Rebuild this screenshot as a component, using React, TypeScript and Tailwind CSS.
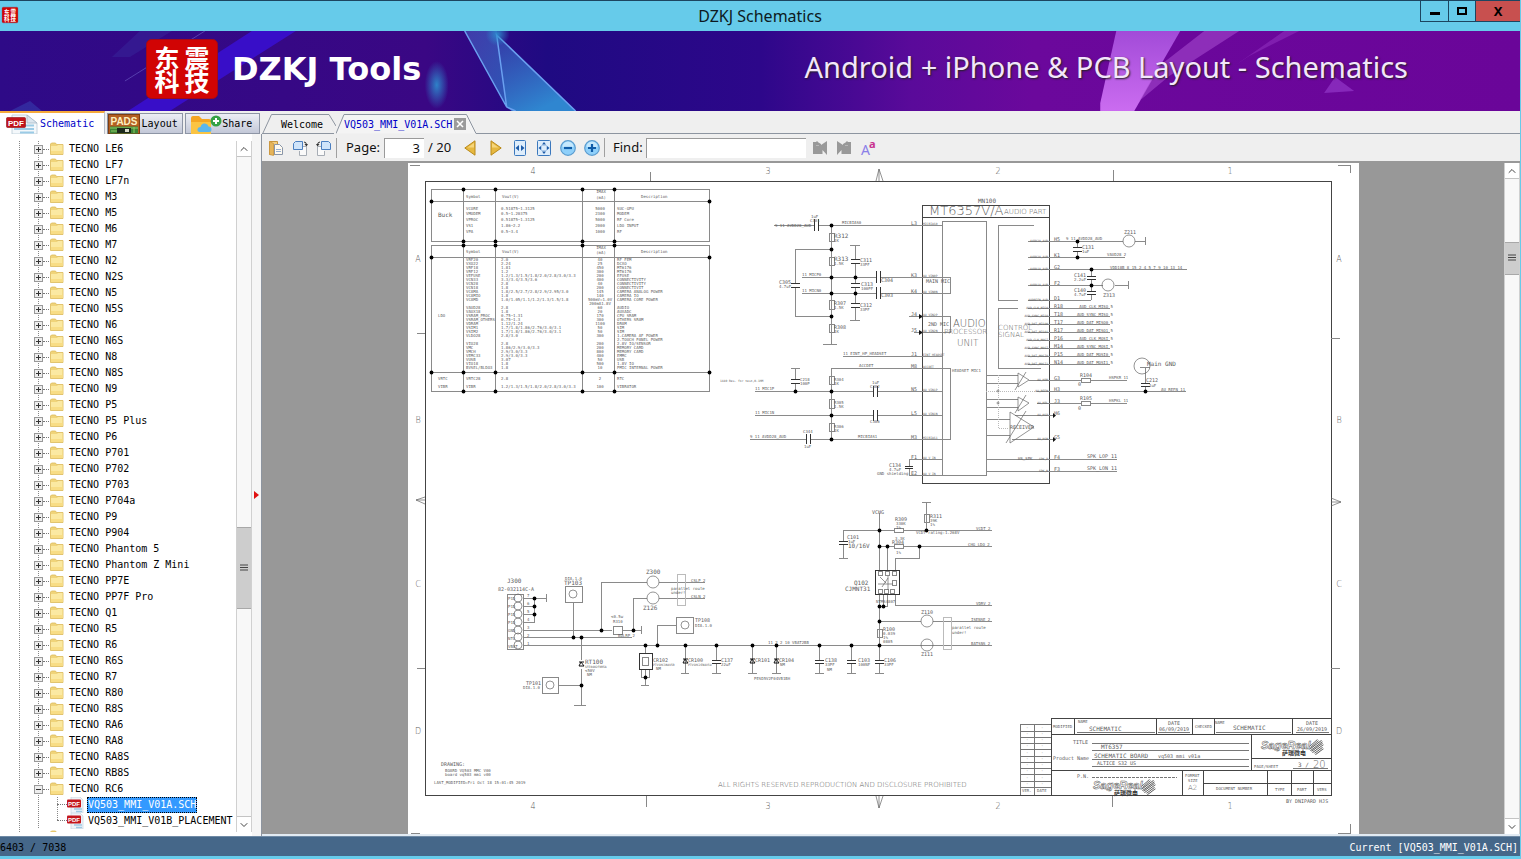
import { ChevronDown, ChevronUp } from "lucide-react";
import type { ReactNode } from "react";

type Label = [x: number, y: number, text: string, size?: number, anchor?: "start" | "middle" | "end"];

const models = [
  "LE6", "LF7", "LF7n", "M3", "M5", "M6", "M7", "N2", "N2S", "N5", "N5S", "N6", "N6S", "N8", "N8S", "N9",
  "P5", "P5 Plus", "P6", "P701", "P702", "P703", "P704a", "P9", "P904", "Phantom 5", "Phantom Z Mini",
  "PP7E", "PP7F Pro", "Q1", "R5", "R6", "R6S", "R7", "R80", "R8S", "RA6", "RA8", "RA8S", "RB8S", "RC6",
];

const files = ["VQ503_MMI_V01A.SCH", "VQ503_MMI_V01B_PLACEMENT"];

/* ---------- icons ---------- */

const FolderIcon = () => (
  <svg className="h-4 w-4 shrink-0" viewBox="0 0 16 16">
    <path d="M1.5 3 L2.5 2 H6.5 L7.5 3.500 H14 V13.500 H1.5 Z" fill="#f0d47a" stroke="#dcba5c" strokeWidth="0.8" />
    <path d="M2 5 H8 L9 4 H13.500 V13 H2 Z" fill="#fbe9a2" />
    <path d="M2 10 H13.500 V13 H2 Z" fill="#f8dd85" />
  </svg>
);

const PdfIcon = () => (
  <svg className="h-4 w-5 shrink-0" viewBox="0 0 20 16">
    <path d="M4 0 H13 L16 3 V16 H4 Z" fill="#eef3f8" stroke="#c5d3df" strokeWidth="0.7" />
    <path d="M7 12 H15 M9 14.5 H15" stroke="#9fc9e3" strokeWidth="1.5" />
    <rect x="0" y="2.500" width="14" height="8" rx="1" fill="#c4161c" />
    <text x="7" y="9" fontSize="6" fontWeight="bold" fill="#fff" textAnchor="middle" fontFamily="Liberation Sans, sans-serif">PDF</text>
  </svg>
);

const PdfTabIcon = () => (
  <svg className="h-5 w-8 shrink-0" viewBox="0 0 32 20">
    <path d="M6 1 H21 L31 9 V20 H6 Z" fill="#f4f8fb" stroke="#b9c9d6" strokeWidth="0.8" />
    <path d="M21 1 V9 H31 Z" fill="#dbe6ee" stroke="#a7b9c7" strokeWidth="0.8" />
    <path d="M19 11.5 H28 M8 15 H28 M14 18.5 H28" stroke="#9bcbe6" strokeWidth="2" />
    <rect x="0.5" y="3.5" width="19" height="10" rx="1" fill="#c1121a" stroke="#8f0b10" strokeWidth="0.6" />
    <text x="10" y="11.500" fontSize="8" fontWeight="bold" fill="#fff" textAnchor="middle" fontFamily="Liberation Sans, sans-serif">PDF</text>
  </svg>
);

const PadsIcon = () => (
  <svg className="h-5 w-8 shrink-0" viewBox="0 0 32 20">
    <rect x="0.5" y="0.5" width="31" height="19" fill="#b35f22" stroke="#7d3e12" />
    <text x="16" y="11" fontSize="10" fontWeight="bold" fill="#fdf0c0" textAnchor="middle" fontFamily="Liberation Sans, sans-serif">PADS</text>
    <rect x="2" y="12.500" width="28" height="7" fill="#3c8436" />
    <path d="M2 14 H30 M3 17 H12 M26 13 V19" stroke="#8ecb62" />
    <rect x="9" y="14" width="14" height="5" fill="#1c2a1c" />
    <rect x="17" y="15" width="4" height="3" fill="#d8dccb" />
  </svg>
);

const CloudFolderIcon = () => (
  <svg className="h-5 w-8 shrink-0" viewBox="0 0 32 20">
    <path d="M1 20 V4 Q1 2 3 2 H9 L12 5 H19 Q21 5 21 7 V20 Z" fill="#f5a623" />
    <path d="M1 20 V8 H21 V20 Z" fill="#fbc443" />
    <path d="M10 18 Q7 18 7.500 15 Q8 13 10.500 13 Q11.500 9 15 9.500 Q18 10 18.500 12.500 Q21.500 12.500 21.500 15.500 Q21.500 18 19 18 Z" fill="#5cb7ee" />
    <circle cx="26" cy="7" r="5.500" fill="#35a244" />
    <path d="M26 4 V10 M23 7 H29" stroke="#fff" strokeWidth="2" />
  </svg>
);

const Seal = ({ className }: { className: string }) => (
  <svg className={className} viewBox="0 0 72 60" preserveAspectRatio="none">
    <rect x="0.5" y="0.5" width="71" height="59" rx="5" fill="#d10404" stroke="#a00a1a" />
    <g fill="#fff" fontSize="25" fontWeight="bold" textAnchor="middle" fontFamily="Noto Sans CJK SC, sans-serif">
      <text x="21" y="29">东</text>
      <text x="51" y="29">震</text>
      <text x="21" y="52">科</text>
      <text x="51" y="52">技</text>
    </g>
  </svg>
);

const OpenIcon = () => (
  <svg className="h-4 w-4" viewBox="0 0 16 16">
    <path d="M1.5 1.500 H9.500 V14.500 H1.500 Z" fill="#f3cf83" stroke="#c7943c" />
    <path d="M1.500 1.500 L5.500 3.500 V15.500 L1.500 14.500 Z" fill="#e5b45a" stroke="#c7943c" strokeWidth="0.7" />
    <path d="M6.500 4.500 H11.500 L14.500 7.500 V14.500 H6.500 Z" fill="#fffaf0" stroke="#8a96a8" />
    <path d="M8 9.500 H13 M8 11.500 H13" stroke="#7b9ccc" strokeWidth="0.8" />
  </svg>
);

const RotateIcon = ({ flip }: { flip?: boolean }) => (
  <svg className={flip ? "h-4 w-4 -scale-x-100" : "h-4 w-4"} viewBox="0 0 16 16">
    <path d="M9 6.500 H14.500 V15.500 H7.500 V11" fill="#fafafa" stroke="#a7adb5" />
    <path d="M3.500 1.500 H10.500 V9.500 H1.500 V3.500 Z" fill="#cfe4fa" stroke="#4b7fc0" />
    <path d="M12 2 Q14.500 2 14.500 5" fill="none" stroke="#333" />
    <path d="M12.500 4 H16 L14.500 6.500 Z" fill="#333" />
  </svg>
);

const FitIcon = ({ page }: { page?: boolean }) => (
  <svg className="h-4 w-4" viewBox="0 0 16 16">
    <rect x={page ? 1.5 : 2.5} y="0.5" width={page ? 13 : 11} height="15" rx="1" fill="#deedfb" stroke="#3b78bd" />
    <path d={page ? "M2.500 8 L5 6 V10 Z M13.500 8 L11 6 V10 Z M8 2 L6 4.500 H10 Z M8 14 L6 11.500 H10 Z" : "M3.500 8 L7 5 V11 Z M12.500 8 L9 5 V11 Z"} fill="#1d5ba8" />
    {page && <rect x="5.500" y="5.500" width="5" height="5" fill="none" stroke="#7fa9d8" strokeDasharray="1 1" />}
  </svg>
);

const ZoomIcon = ({ plus }: { plus?: boolean }) => (
  <svg className="h-4 w-4" viewBox="0 0 16 16">
    <circle cx="8" cy="8" r="7.300" fill="#8fd0fa" stroke="#5b9ccf" strokeWidth="1.200" />
    <path d="M2.500 7 A5.500 5.500 0 0 1 13.500 7 Z" fill="#c5e8fd" />
    <path d={plus ? "M4 8 H12 M8 4 V12" : "M4 8 H12"} stroke="#0f5ca8" strokeWidth="2.200" />
  </svg>
);

const ArrowIcon = ({ right }: { right?: boolean }) => (
  <svg className={right ? "h-4 w-3 -scale-x-100" : "h-4 w-3"} viewBox="0 0 12 16">
    <path d="M0.800 8 L11 0.800 V15.200 Z" fill="#e6b840" stroke="#b98a1c" />
    <path d="M3.500 7.500 L10 3 V7.500 Z" fill="#f6d67c" />
  </svg>
);

const FindIcon = ({ next }: { next?: boolean }) => (
  <svg className={next ? "h-4 w-4 -scale-x-100" : "h-4 w-4"} viewBox="0 0 16 16">
    <path d="M1 2 H4 L5 1 L6.500 2.500 L9 4 V5 L15 1 V15 L10.500 10 V14 H1 Z" fill="#999" />
    <path d="M4 5.500 H7" stroke="#b8b8b8" />
  </svg>
);

const CaseIcon = () => (
  <svg className="h-4 w-4 overflow-visible" viewBox="0 0 16 16" fontFamily="Noto Sans, sans-serif">
    <text x="1" y="15" fontSize="14" fill="#8b7fe8">A</text>
    <text x="9" y="8" fontSize="11" fontWeight="bold" fill="#c8328f">a</text>
  </svg>
);

/* ---------- chrome ---------- */

const TitleBar = () => (
  <header className="relative flex h-[31px] shrink-0 items-center justify-center border-t border-[#1c4560] bg-[#66cbea]">
    <Seal className="absolute left-0.5 top-1.5 h-4 w-4 overflow-visible" />
    <h1 className="text-base leading-5 text-[#0d1a22]">DZKJ Schematics</h1>
    <div className="absolute right-0 top-0 flex h-[21px]">
      <button aria-label="Minimize" className="flex w-7 items-end justify-center border-b border-l border-[#1c4560] pb-1.5">
        <span className="h-[3px] w-2.5 bg-black" />
      </button>
      <button aria-label="Maximize" className="flex w-[27px] items-center justify-center border-b border-l border-[#1c4560]">
        <span className="h-2 w-2.5 border-2 border-black" />
      </button>
      <button aria-label="Close" className="w-[45px] border-b border-l border-[#1c4560] bg-[#c8504f] text-[13px] font-bold leading-4 text-black">
        X
      </button>
    </div>
  </header>
);

const Banner = () => (
  <div className="relative flex h-20 shrink-0 items-center justify-between overflow-hidden bg-[#2e0a87]">
    <svg className="absolute inset-0 h-full w-full" viewBox="0 0 1521 80" preserveAspectRatio="none">
      <defs>
        <linearGradient id="sky" x1="0" x2="1">
          <stop offset="0" stopColor="#2e0a87" />
          <stop offset="0.28" stopColor="#3a0784" />
          <stop offset="0.36" stopColor="#1f0a82" />
          <stop offset="0.5" stopColor="#2d078a" />
          <stop offset="0.6" stopColor="#5a0a9a" />
          <stop offset="0.68" stopColor="#6b089c" />
          <stop offset="1" stopColor="#6a0599" />
        </linearGradient>
        <linearGradient id="shard" x1="0" x2="0.5" y1="0" y2="1">
          <stop offset="0" stopColor="#3a5cc0" stopOpacity="0.6" />
          <stop offset="1" stopColor="#2f86d0" />
        </linearGradient>
        <linearGradient id="wing" x1="0" x2="1" y1="0" y2="1">
          <stop offset="0" stopColor="#4f6fd0" stopOpacity="0.5" />
          <stop offset="1" stopColor="#2f78cc" stopOpacity="0.7" />
        </linearGradient>
        <linearGradient id="beam" x1="0" x2="0" y1="0" y2="1">
          <stop offset="0" stopColor="#a24bd8" />
          <stop offset="1" stopColor="#cb6cf0" />
        </linearGradient>
        <radialGradient id="glow">
          <stop offset="0" stopColor="#2d8fd0" stopOpacity="0.9" />
          <stop offset="1" stopColor="#2d8fd0" stopOpacity="0" />
        </radialGradient>
      </defs>
      <rect width="1521" height="80" fill="url(#sky)" />
      <path d="M252 0 H296 L170 80 H128 Z" fill="#3a10d8" opacity="0.8" />
      <path d="M140 0 H172 L130 26 H112 Z" fill="#3a3aa8" opacity="0.3" />
      <path d="M205 0 L125 50" stroke="#6f62c8" opacity="0.6" />
      <path d="M10 80 L30 70 L42 80 Z" fill="#3a55c0" opacity="0.4" />
      <ellipse cx="437" cy="54" rx="12" ry="24" fill="url(#glow)" />
      <path d="M465 0 H497 L507 76 Z" fill="url(#wing)" />
      <path d="M497 4 L576 80 H512 L507 76 Z" fill="url(#shard)" />
      <path d="M465 0 L507 76 L497 4 L576 80 M507 76 L516 80" stroke="#6aa0f0" strokeWidth="1.500" fill="none" />
      <circle cx="498" cy="3" r="12" fill="url(#glow)" />
      <path d="M1117 0 H1181 L1135 80 H1101 V72 Z" fill="url(#beam)" />
      <path d="M1205 0 H1240 L1170 45 L1140 70 L1160 35 Z" fill="#a94fd2" opacity="0.55" />
      <path d="M1285 0 H1300 L1250 25 L1235 35 Z" fill="#a040cc" opacity="0.4" />
      <path d="M1336 46 L1355 60 L1325 62 Z" fill="#9a3fd0" opacity="0.6" />
    </svg>
    <div className="relative flex items-center gap-3.5 pb-1 pl-[146px]">
      <Seal className="h-[60px] w-[72px] overflow-visible" />
      <span className="font-[DejaVu_Sans,sans-serif] text-[32px] font-bold leading-10 text-white">DZKJ Tools</span>
    </div>
    <p className="relative pb-2 pr-28 text-[29px] leading-8 text-[#f3e6fb] [text-shadow:1px_1px_2px_#222]">
      Android + iPhone &amp; PCB Layout - Schematics
    </p>
  </div>
);

const SideTabs = () => (
  <div className="grid w-[262px] shrink-0 grid-cols-[105fr_77fr_75fr] items-end gap-0.5 pr-0.5 font-[DejaVu_Sans_Mono,monospace] text-[10px]">
    <button className="flex h-[23px] items-center gap-0.5 border-r border-t-2 border-[#b9c0cc] border-t-[#f5a93b] bg-white pl-1.5 text-[#0000c8]">
      <PdfTabIcon />
      Schematic
    </button>
    <button className="flex h-[21px] items-center gap-0.5 border border-[#8d95a5] bg-linear-to-b from-[#eceef4] to-[#c3c8d8]">
      <PadsIcon />
      Layout
    </button>
    <button className="flex h-[21px] items-center border border-[#8d95a5] bg-linear-to-b from-[#eceef4] to-[#c3c8d8] pl-1">
      <CloudFolderIcon />
      Share
    </button>
  </div>
);

const DocTabs = () => (
  <div className="flex h-[23px] min-w-0 flex-1 items-end font-[DejaVu_Sans_Mono,monospace] text-[10px]">
    <button className="relative h-5 w-[74px] pl-1.5">
      <svg className="absolute inset-0 h-full w-full" viewBox="0 0 74 20">
        <path d="M0.500 20 L9.500 0.500 H67 L74 12 M0 19.500 H72" fill="none" stroke="#8d95a0" />
      </svg>
      <span className="relative">Welcome</span>
    </button>
    <div className="relative flex h-5 w-[140px] items-center gap-0.5 pl-2">
      <svg className="absolute inset-0 h-full w-full" viewBox="0 0 140 20">
        <path d="M0 19.500 L8 0.500 H130.500 L140 19.500" fill="#f4f4f4" stroke="#8d95a0" />
      </svg>
      <button className="relative text-[#0000c8]">VQ503_MMI_V01A.SCH</button>
      <button aria-label="Close tab" className="relative flex h-3 w-3 items-center justify-center bg-[#9b9b9b]">
        <svg className="h-2 w-2" viewBox="0 0 8 8"><path d="M1 1 L7 7 M7 1 L1 7" stroke="#fff" strokeWidth="1.500" /></svg>
      </button>
    </div>
    <div className="h-px flex-1 bg-[#8d95a0]" />
  </div>
);

const ToolButton = ({ label, children }: { label: string; children: ReactNode }) => (
  <button aria-label={label} className="flex w-6 shrink-0 items-center justify-center">{children}</button>
);

const Toolbar = () => (
  <div className="flex h-[27px] shrink-0 items-center bg-[#efefef] pl-0.5 text-[13px] text-[#111]">
    <ToolButton label="Open"><OpenIcon /></ToolButton>
    <ToolButton label="Rotate right"><RotateIcon /></ToolButton>
    <ToolButton label="Rotate left"><RotateIcon flip /></ToolButton>
    <span className="h-5 w-px bg-[#a0a0a0]" />
    <label htmlFor="page" className="w-[47px] pl-[9px]">Page:</label>
    <input id="page" defaultValue="3" className="h-5 w-10 border-l border-t border-[#9a9a9a] bg-white pr-1 text-right" />
    <span className="w-[34px] pl-1">/ 20</span>
    <ToolButton label="Previous page"><ArrowIcon /></ToolButton>
    <span className="w-0.5" />
    <ToolButton label="Next page"><ArrowIcon right /></ToolButton>
    <ToolButton label="Fit width"><FitIcon /></ToolButton>
    <ToolButton label="Fit page"><FitIcon page /></ToolButton>
    <ToolButton label="Zoom out"><ZoomIcon /></ToolButton>
    <ToolButton label="Zoom in"><ZoomIcon plus /></ToolButton>
    <label htmlFor="find" className="w-[42px] border-l border-[#a0a0a0] pl-2">Find:</label>
    <input id="find" className="h-5 w-40 border-l border-t border-[#9a9a9a] bg-white px-1" />
    <span className="w-0.5" />
    <ToolButton label="Find previous"><FindIcon /></ToolButton>
    <ToolButton label="Find next"><FindIcon next /></ToolButton>
    <ToolButton label="Match case"><CaseIcon /></ToolButton>
  </div>
);

/* Spacer sizes are flex weights, so the thumb keeps its place at any height. */
const ScrollBar = ({ before, thumb, after }: { before: number; thumb: number; after: number }) => (
  <div className="flex w-4 shrink-0 flex-col border-x border-[#d0d0d0] bg-[#f8f8f8]">
    <button aria-label="Scroll up" className="flex h-4 items-center justify-center border-b border-[#c4c4c4] bg-white">
      <ChevronUp size={12} color="#444" />
    </button>
    <div style={{ flex: `${before} 1 0px` }} />
    <div className="flex items-center justify-center border-y border-[#a8a8a8] bg-[#cdcdcd]" style={{ flex: `${thumb} 1 0px` }}>
      <svg className="h-2 w-2" viewBox="0 0 8 8"><path d="M0 1 H8 M0 3.500 H8 M0 6 H8" stroke="#444" /></svg>
    </div>
    <div style={{ flex: `${after} 1 0px` }} />
    <button aria-label="Scroll down" className="flex h-4 items-center justify-center border-t border-[#c4c4c4] bg-white">
      <ChevronDown size={12} color="#444" />
    </button>
  </div>
);

const Tree = () => (
  <ul
    role="tree"
    className="min-w-0 flex-1 overflow-hidden bg-[linear-gradient(#888_50%,transparent_50%)] bg-[length:1px_2px] bg-[position:19px_0] bg-repeat-y pl-[19px] font-[DejaVu_Sans_Mono,monospace] text-[10px] leading-4 text-black"
  >
    {models.map((m) => (
      <li key={m} role="treeitem" className="flex h-4 items-center">
        <span className="flex w-[30px] items-center self-stretch bg-[linear-gradient(#888_50%,transparent_50%)] bg-[length:1px_2px] bg-[position:19px_0] bg-repeat-y pl-[15px]">
          <span className="flex h-[9px] w-[9px] items-center justify-center border border-[#999] bg-[#eee]">
            <svg className="h-[7px] w-[7px]" viewBox="0 0 7 7">
              <path d={m === "RC6" ? "M1 3.500 H6" : "M1 3.500 H6 M3.500 1 V6"} stroke="#333" shapeRendering="crispEdges" />
            </svg>
          </span>
          <span className="flex-1 border-t border-dotted border-[#777]" />
        </span>
        <FolderIcon />
        <button className="whitespace-pre pl-1">TECNO {m}</button>
      </li>
    ))}
    {files.map((f, i) => (
      <li key={f} role="treeitem" className="flex h-4 items-center">
        <span className="h-4 w-[38px] bg-[linear-gradient(#888_50%,transparent_50%)] bg-[length:1px_2px] bg-[position:19px_0] bg-repeat-y" />
        <span
          className={`flex w-2.5 items-end self-start bg-[linear-gradient(#888_50%,transparent_50%)] bg-[length:1px_2px] bg-repeat-y ${i ? "h-2" : "h-4 pb-2"}`}
        >
          <span className="w-full border-t border-dotted border-[#777]" />
        </span>
        <PdfIcon />
        <button className={i ? "px-px" : "bg-[#3399ff] px-px text-white outline-1 -outline-offset-1 outline-dotted outline-black"}>{f}</button>
      </li>
    ))}
    <li className="flex h-4 pl-[30px]"><FolderIcon /></li>
  </ul>
);

/* ---------- schematic ---------- */

const dots: [number, number][] = [
  [431, 201], [463, 189], [495, 189], [582, 189], [614, 189], [709, 201],
  [463, 241], [495, 241], [582, 241], [614, 241], [463, 245], [495, 245], [582, 245], [614, 245],
  [431, 257], [709, 257], [431, 372], [463, 372], [495, 372], [582, 372], [614, 372], [709, 372],
  [463, 391], [495, 391], [582, 391], [614, 391],
  [831, 225], [831, 249], [831, 277], [831, 293], [831, 316], [855, 277], [855, 293],
  [795, 391], [831, 391], [831, 415], [831, 439], [1077, 241], [1077, 257], [1091, 269], [1091, 285], [1145, 391],
  [534, 598], [534, 606], [534, 614], [601, 630], [633, 630], [573, 637], [581, 637], [581, 685],
  [645, 645], [657, 645], [685, 645], [716, 645], [645, 677],
  [752, 645], [776, 645], [819, 645], [851, 645], [879, 645], [879, 621], [879, 606], [883, 606],
  [879, 530], [879, 546], [887, 546], [919, 546], [926, 530],
];

const tables =
  "M431 189H709V241H431ZM431 201H709M463 189V241M495 189V241M582 189V241M614 189V241" +
  "M431 245H709V391H431ZM431 257H709M431 372H709M463 245V391M495 245V391M582 245V391M614 245V391";

const wires =
  "M774 225H814M818 225H922M831 225V344M823 344H837M795 249H831M795 249V283M795 287V316H831" +
  "M802 277H876M880 277H922M802 293H876M880 293H922M855 245V259M855 263V283M855 287V303M855 307V320M850 245H860M850 320H860" +
  "M909 316H922M914 332H922M843 356H922M831 368H922M831 368V439M755 391H873M877 391H922M755 415H873M877 415H922M750 439H806M810 439H922" +
  "M795 368V379M795 383V391M791 368H800M909 459H922M909 459V466M909 468V475H922" +
  "M922 225H942M922 277H950V293H922M922 316H950V332H922M922 356H942M922 368H950V439H922M922 391H942M922 415H942M922 459H942M922 475H942" +
  "M1034 225H998V300H1018M1018 308H998V368H1041M1028 241H1123M1135 241H1145V237V245M1028 257H1125M1028 269H1187M1028 285H1103M1115 285H1128M1128 281V289M1028 300H1091" +
  "M1077 241V247M1077 251V257M1091 269V276M1091 279V291M1091 294V300" +
  "M1028 308H1110M1028 316H1110M1028 324H1110M1028 332H1110M1028 340H1110M1028 348H1110M1028 356H1110M1028 364H1110" +
  "M1029 380H1081M1090 380H1127M1037 391H1186M1037 403H1081M1090 403H1127M1145 367V383M1145 386V391M1140 367H1150" +
  "M986 375H1018M986 383H1018M986 399H1018M986 407H1018M986 419H1010M986 435H1010M1015 415H1053M1012 439H1053M986 459H1117M986 471H1117" +
  "M523 598H546M546 594V602M523 606H534M523 614H534M523 622H534V598M523 630H612M623 630H641M641 626V634M523 637H632M523 645H985" +
  "M573 602V637M601 630V582H647M659 582H705M633 630V598H647M659 598H705M657 645V625H676M581 637V660M581 669V705M574 705H586M558 685H581" +
  "M645 645V653M645 669V685M641 685H649M641 669V677H649V669M685 645V673M681 673H689M716 645V660M716 663V673M712 673H721" +
  "M752 645V673M748 673H757M776 645V673M772 673H781M819 645V660M819 663V673M815 673H824M851 645V660M851 663V673M847 673H856M879 663V673M875 673H884" +
  "M879 513V570M879 594V660M879 530H894M903 530H992M843 530V541M843 530H879M843 544V558M839 558H848M926 502V530M922 502H931" +
  "M879 546H894M903 546H992M887 546V570M919 546V558H895V570M895 594V605H992M887 594V606H879M883 594V606M879 621H921M933 621H992M933 645H992";

const boxes =
  "M942 221H986V475H942ZM829 233H834V241H829ZM829 257H834V265H829ZM829 300H834V309H829ZM829 324H834V332H829Z" +
  "M829 376H834V384H829ZM829 399H834V408H829ZM829 423H834V431H829ZM1081 378H1090V382H1081ZM1081 401H1090V405H1081Z" +
  "M507 594H523V649H507ZM565 586H582V602H565ZM542 677H558V693H542ZM676 617H693V633H676ZM613 626H622V634H613Z" +
  "M894 528H903V532H894ZM894 544H903V548H894ZM924 514H929V522H924ZM877 629H882V637H877Z" +
  "M878 571H882V575H878ZM885 571H889V575H885ZM892 571H896V575H892ZM878 589H882V593H878ZM884 589H888V593H884ZM890 589H894V593H890ZM892 580H896V585H892ZM642 657H648V665H642Z";

const plates =
  "M814 219V231M818 219V231M876 271V283M880 271V283M876 287V299M880 287V299M873 386V397M877 386V397M873 410V421M877 410V421M806 434V444M810 434V444" +
  "M791 283H800M791 287H800M851 259H860M851 263H860M851 283H860M851 287H860M851 303H860M851 307H860M791 379H800M791 383H800M905 466H913M905 468H913" +
  "M1073 247H1082M1073 251H1082M1087 276H1096M1087 279H1096M1087 291H1096M1087 294H1096M1141 383H1150M1141 386H1150" +
  "M712 660H721M712 663H721M815 660H824M815 663H824M847 660H856M847 663H856M875 660H884M875 663H884M839 541H848M839 544H848";

const titleBlock =
  "M1051 718H1331M1051 718V795M1051 734H1331M1051 770H1331M1074 718V734M1156 718V734M1192 718V734M1214 718V734M1292 718V734" +
  "M1251 734V770M1251 758H1331M1182 770V795M1203 770V795M1203 783H1331M1267 770V795M1291 770V795M1313 770V795";

const titleRules =
  "M1077 732H1155M1158 732H1190M1216 732H1291M1296 732H1329M1092 743H1249M1092 750H1249M1092 759H1249M1092 766H1249M1293 768H1328" +
  "M1020 724H1051M1020 731H1051M1020 737H1051M1020 743H1051M1020 749H1051M1020 756H1051M1020 762H1051M1020 768H1051M1020 774H1051M1020 781H1051M1020 787H1051M1020 724V795M1034 724V795";

type Rail = [y: number, name: string, volts: string, amps: string, use: string];

const rails: Rail[] = [
  [210, "VCORE", "0.51875~1.3125", "5000", "SUC-GPU"],
  [215, "VMODEM", "0.5~1.20375", "2300", "MODEM"],
  [221, "VPROC", "0.51875~1.3125", "5000", "RF Core"],
  [227, "VS1", "1.86~2.2", "2000", "LDO INPUT"],
  [233, "VPA", "0.5~3.4", "1000", "RF"],
  [261, "VRF20", "2.0", "40", "RF FEM"],
  [265, "VXO22", "2.24", "25", "DCXO"],
  [269, "VRF18", "1.81", "450", "MT6176"],
  [273, "VRF12", "1.2", "300", "MT6176"],
  [277, "VEFUSE", "1.2/1.3/1.5/1.8/2.0/2.8/3.0/3.3", "200", "EFUSE"],
  [281, "VCN33", "3.3/3.4/3.5/3.6", "400", "CONNECTIVITY"],
  [285, "VCN28", "2.8", "40", "CONNECTIVITY"],
  [289, "VCN18", "1.8", "200", "CONNECTIVIT"],
  [293, "VCAMA", "1.8/2.5/2.7/2.8/2.9/2.95/3.0", "145", "CAMERA ANALOG POWER"],
  [297, "VCAMIO", "1.8", "140", "CAMERA IO"],
  [301, "VCAMD", "1.0/1.05/1.1/1.2/1.3/1.5/1.8", "500mV=1.0V", "CAMERA CORE POWER"],
  [305, "", "", "200mA1.8V", ""],
  [309, "VAUD28", "2.8", "60", "AUDIO"],
  [313, "VAUX18", "1.8", "20", "AUXADC"],
  [317, "VSRAM_PROC", "0.75~1.31", "170", "CPU SRAM"],
  [321, "VSRAM_OTHERS", "0.75~1.3", "300", "OTHERS SRAM"],
  [325, "VDRAM", "1.12/1.24", "1100", "DRAM"],
  [329, "VSIM1", "1.7/1.8/1.86/2.76/3.0/3.1", "50", "SIM"],
  [333, "VSIM2", "1.7/1.8/1.86/2.76/3.0/3.1", "50", "SIM"],
  [337, "VLDO28", "2.8/3.0", "300", "1.CAMERA AF POWER"],
  [341, "", "", "", "2.TOUCH PANEL POWER"],
  [345, "VIO28", "2.8", "200", "2.8V IO/SENSOR"],
  [349, "VMC", "1.86/2.9/3.0/3.3", "200", "MEMORY CARD"],
  [353, "VMCH", "2.9/3.0/3.3", "800", "MEMORY CARD"],
  [357, "VEMC33", "2.9/3.0/3.3", "400", "EMMC"],
  [361, "VUSB", "3.07", "50", "USB"],
  [365, "VIO18", "1.8", "500", "1.8V IO"],
  [369, "BVSEL/BLDO3", "1.8", "10", "PMIC INTERNAL POWER"],
  [380, "VRTC28", "2.8", "2", "RTC"],
  [388, "VIBR", "1.2/1.3/1.5/1.8/2.0/2.8/3.0/3.3", "100", "VIBRATOR"],
];

const rightPins: [number, string, string, string][] = [
  [241, "H5", "AVDD28_AUD", ""],
  [257, "K1", "AVDD28_AUB", ""],
  [269, "G2", "AVDD18_AUD", ""],
  [285, "F2", "AVDD18_AUB", ""],
  [300, "D1", "AUDREFN_AUD", ""],
  [308, "R18", "AUD_CLK_MISO", "AUD_CLK_MISO 5"],
  [316, "T18", "AUD_SYNC_MISO", "AUD_SYNC_MISO 5"],
  [324, "T17", "AUD_DAT_MISO0", "AUD_DAT_MISO0 5"],
  [332, "R17", "AUD_DAT_MISO1", "AUD_DAT_MISO1 5"],
  [340, "P16", "AUD_CLK_MOSI", "AUD_CLK_MOSI 5"],
  [348, "M14", "AUD_SYNC_MOSI", "AUD_SYNC_MOSI 5"],
  [356, "P15", "AUD_DAT_MOSI0", "AUD_DAT_MOSI0 5"],
  [364, "N14", "AUD_DAT_MOSI1", "AUD_DAT_MOSI1 5"],
  [380, "G3", "AU_HPR", ""],
  [391, "H3", "AU_REFN", ""],
  [403, "J3", "AU_HPL", ""],
  [415, "H6", "AU_HSP", ""],
  [439, "G5", "AU_HSN", ""],
  [459, "F4", "SPK_P", ""],
  [471, "F3", "SPK_N", ""],
];

const leftPins: [number, string, string][] = [
  [225, "L3", "MICBIAS0"], [277, "K3", "AU_VIN0P"], [293, "K4", "AU_VIN0N"], [316, "J4", "AU_VIN2P"],
  [332, "J5", "AU_VIN2N"], [356, "J1", "EINT_HEADSET"], [368, "M8", "ACCDET"], [391, "N5", "AU_VIN1P"],
  [415, "L5", "AU_VIN1N"], [439, "M3", "MICBIAS1"], [459, "F1", "AU_V_IN"], [475, "E2", "AU_V_IN"],
];

const labels: Label[] = [
  [533, 174, "4", 8, "middle"], [768, 174, "3", 8, "middle"], [998, 174, "2", 8, "middle"], [1230, 174, "1", 8, "middle"],
  [533, 809, "4", 8, "middle"], [768, 809, "3", 8, "middle"], [998, 809, "2", 8, "middle"], [1230, 809, "1", 8, "middle"],
  [418, 262, "A", 8, "middle"], [418, 423, "B", 8, "middle"], [418, 587, "C", 8, "middle"], [418, 734, "D", 8, "middle"],
  [1339, 262, "A", 8, "middle"], [1339, 423, "B", 8, "middle"], [1339, 587, "C", 8, "middle"], [1339, 734, "D", 8, "middle"],
  [466, 198, "Symbol", 4], [502, 198, "Vout(V)", 4], [601, 193, "IMAX", 4, "middle"], [601, 199, "(mA)", 4, "middle"], [641, 198, "Description", 4],
  [466, 253, "Symbol", 4], [502, 253, "Vout(V)", 4], [601, 249, "IMAX", 4, "middle"], [601, 254, "(mA)", 4, "middle"], [641, 253, "Description", 4],
  [438, 217, "Buck", 6], [438, 317, "LDO", 4], [438, 380, "VRTC", 4], [438, 388, "VIBR", 4],
  [987, 203, "MN100", 6, "middle"], [929, 215, "MT6357V/A", 13], [1004, 214, "AUDIO PART", 7],
  [926, 283, "MAIN MIC", 5], [928, 326, "2ND MIC", 5], [952, 372, "HEADSET MIC1", 4],
  [953, 327, "AUDIO", 10], [944, 334, "PROCESSOR", 7], [957, 346, "UNIT", 9], [998, 330, "CONTROL", 7], [998, 337, "SIGNAL", 7],
  [775, 227, "9 11 AVDD28_AUD", 4], [842, 224, "MICBIAS0", 4], [811, 218, "1uF", 4], [810, 222, "C301", 4],
  [834, 238, "R312", 6], [834, 242, "1K", 4], [834, 261, "R313", 6], [834, 265, "1.5K", 4], [860, 262, "C311", 5], [860, 266, "33PF", 4],
  [802, 276, "11 MICP0", 4], [802, 292, "11 MICN0", 4], [779, 284, "C305", 5], [779, 288, "4.7uF", 4],
  [861, 286, "C313", 5], [861, 290, "100PF", 4], [881, 282, "C304", 5], [881, 297, "C303", 5],
  [834, 305, "R307", 5], [834, 309, "1.5K", 4], [860, 307, "C312", 5], [860, 311, "33PF", 4], [834, 329, "R308", 5], [834, 333, "1K", 4],
  [843, 355, "11 EINT_HP_HEADSET", 4], [859, 367, "ACCDET", 4], [720, 382, "1440 Res. for test,0.1HM", 3],
  [800, 381, "C218", 4], [800, 385, "100P", 4], [834, 381, "R304", 4], [834, 385, "1K", 4], [872, 384, "1uF", 4], [870, 388, "C302", 4],
  [755, 390, "11 MIC1P", 4], [755, 414, "11 MIC1N", 4], [834, 404, "R305", 4], [834, 408, "1.5K", 4], [834, 428, "R306", 4], [834, 432, "1K", 4],
  [870, 423, "C306", 4], [803, 433, "C344", 4], [804, 448, "1uF", 4], [750, 438, "9 11 AVDD28_AUD", 4], [858, 438, "MICBIAS1", 4],
  [889, 467, "C134", 5], [889, 471, "4.7uF", 4], [877, 475, "GND shielding", 4],
  [1066, 240, "9 11 AVDD28_AUD", 4], [1124, 234, "Z211", 5], [1082, 249, "C131", 5], [1082, 253, "1uF", 4], [1107, 256, "VAUD28 2", 4],
  [1110, 269, "VDD18B 8 15 2 4 5 7 9 10 13 14", 4], [1074, 277, "C141", 5], [1074, 281, "2.2uF", 4], [1074, 292, "C140", 5], [1074, 296, "4.7uF", 4], [1103, 297, "Z313", 5],
  [1147, 366, "Main GND", 6], [1080, 377, "R104", 5], [1078, 386, "0", 5], [1080, 400, "R105", 5], [1078, 410, "0", 5], [1146, 382, "C212", 5], [1149, 387, "1uF", 4],
  [1109, 379, "HSPKR 11", 4], [1109, 402, "HSPKL 11", 4], [1161, 391, "AU_REFN 11", 4], [1087, 458, "SPK_LOP 11", 5], [1087, 470, "SPK_LON 11", 5],
  [1010, 429, "RECEIVER", 5], [1018, 460, "HS_SPK", 4],
  [507, 583, "J300", 6], [498, 591, "82-032114C-A", 5], [565, 580, "DIA.1.0", 4], [564, 585, "TP103", 6],
  [646, 574, "Z300", 6], [643, 610, "Z126", 6], [691, 582, "CSLP 2", 4], [691, 598, "CSLN 2", 4], [671, 590, "parallel route", 4], [671, 594, "under!", 4],
  [611, 618, "<0.5w", 4], [613, 623, "R310", 4], [618, 637, "BDLRP 2", 4], [695, 622, "TP108", 5], [695, 627, "DIA.1.0", 4],
  [585, 664, "RT100", 6], [585, 668, "SFE0402F0R5A", 3], [585, 672, "<50V", 4], [587, 676, "NM", 4], [526, 685, "TP101", 5], [523, 689, "DIA.1.0", 4],
  [653, 662, "CR102", 5], [653, 666, "PTVSHC3N4V5B", 3], [656, 670, "NM", 4], [688, 662, "CR100", 5], [688, 666, "PTVSHC2EN4V5U", 3], [721, 662, "C137", 5], [721, 666, "22uF", 4],
  [755, 662, "CR101", 5], [779, 662, "CR104", 5], [780, 666, "NM", 4], [754, 680, "PESD5V2F04VB1BH", 4], [768, 644, "11 2 2 10 VBAT2BB", 4],
  [825, 662, "C138", 5], [825, 666, "33PF", 4], [827, 671, "NM", 4], [858, 662, "C103", 5], [858, 666, "100NF", 4], [884, 662, "C106", 5], [884, 666, "33PF", 4],
  [872, 514, "VCHG", 5], [847, 539, "C101", 5], [848, 543, "1uF", 4], [848, 548, "10/16V", 6], [895, 521, "R309", 5], [896, 525, "330K", 4], [896, 529, "1%", 4],
  [930, 518, "R311", 5], [930, 522, "39K", 4], [930, 526, "1%", 4], [916, 534, "VCDT rating:1.268V", 4], [976, 530, "VCDT 2", 4], [968, 546, "CHG_LDO 2", 4],
  [895, 540, "3.3K", 4], [892, 544, "R304", 5], [896, 554, "1%", 4], [854, 585, "Q102", 6], [845, 591, "CJMNT31", 6], [876, 603, "NTMS4807", 4],
  [976, 605, "VDRV 2", 4], [971, 621, "ISENSE 2", 4], [971, 645, "BATSNS 2", 4], [921, 614, "Z110", 5], [921, 656, "Z111", 5],
  [883, 631, "R100", 5], [883, 635, "0.039", 4], [883, 639, "1%", 4], [883, 643, "0805", 4], [952, 629, "parallel route", 4], [952, 634, "under!", 4],
  [441, 766, "DRAWING:", 5], [445, 772, "BOARD VQ503 MMC V00", 4], [445, 776, "board vq503 mmi v00", 4], [434, 784, "LAST_MODIFIED=Fri Oct 18 15:01:45 2019", 4],
  [718, 787, "ALL RIGHTS RESERVED.REPRODUCTION AND DISCLOSURE PROHIBITED", 7],
  [1053, 728, "MODIFIED", 4], [1078, 723, "NAME", 4], [1089, 731, "SCHEMATIC", 6], [1168, 725, "DATE", 5], [1159, 731, "06/09/2019", 5],
  [1195, 728, "CHECKED", 4], [1215, 724, "NAME", 4], [1233, 730, "SCHEMATIC", 6], [1306, 725, "DATE", 5], [1297, 731, "26/09/2019", 5],
  [1073, 744, "TITLE", 5], [1101, 749, "MT6357", 6], [1053, 760, "Product Name", 5], [1094, 758, "SCHEMATIC BOARD", 6], [1158, 758, "vq503_mmi_v01a", 5],
  [1097, 765, "ALTICE S32 US", 5], [1077, 778, "P.N.", 5], [1185, 777, "FORMAT", 4], [1188, 782, "SIZE", 4], [1188, 790, "A2", 7],
  [1216, 790, "DOCUMENT NUMBER", 4], [1275, 791, "TYPE", 4], [1297, 791, "PART", 4], [1317, 791, "VERS", 4], [1254, 768, "PAGE/SHEET", 4],
  [1298, 767, "3 /", 6], [1313, 768, "20", 10], [1022, 792, "VER.", 4], [1037, 792, "DATE", 4], [1286, 803, "BY DNIPARD HJS", 5],
];

const Logo = ({ x, y }: { x: number; y: number }) => (
  <g transform={`translate(${x} ${y})`}>
    <text x="0" y="9" fontSize="11" fontWeight="bold" fontStyle="italic" fill="#fff" stroke="#555" strokeWidth="0.5" fontFamily="Liberation Sans, sans-serif">SageReal</text>
    <text x="21" y="15" fontSize="6" fontWeight="bold" fill="#333" fontFamily="Noto Sans CJK SC, sans-serif">萨瑞微电</text>
    <path d="M49 7 L57 0 M49 10 L61 1 M51 12 L62 4 M54 14 L62 8" stroke="#555" strokeWidth="2.200" />
    <path d="M49 7 L57 0 M49 10 L61 1 M51 12 L62 4 M54 14 L62 8" stroke="#fff" strokeWidth="1" />
  </g>
);

const Schematic = () => (
  <svg className="mx-auto w-[951px] max-w-full bg-white" viewBox="408 163 951 671" role="img" aria-label="Schematic page 3">
    <g fill="none" stroke="#555" shapeRendering="crispEdges">
      <path d="M425 181H1331V795H425Z" stroke="#444" />
      <path d="M410 165H420M1338 165H1350V173M1338 833H1350V824M411 833H420M650 172V181M1113 170V181M646 796V807M1112 796V807M417 333H425M417 668H425M1331 338H1340M1331 668H1340" stroke="#888" />
      <path d={tables} stroke="#8a8a8a" />
      <path d="M922 205H1049V483H922ZM922 217H1049" stroke="#444" />
      <path d={wires} stroke="#8a8a8a" />
      <path d={boxes} stroke="#888" />
      <path d={plates} stroke="#333" />
      <path d="M875 570H899V594H875ZM639 653H652V669H639Z" stroke="#333" />
      <path d={titleBlock} stroke="#444" />
      <path d={titleRules} stroke="#777" />
      <path d="M1092 777H1177" stroke="#777" strokeDasharray="3 1" />
      <path d="M986 391H1037M998 375V428H1008" stroke="#bbb" strokeDasharray="1 1" />
      <path d="M677 574H685V605H677ZM943 617H951V649H943Z" stroke="#bbb" />
    </g>
    <g fill="none" stroke="#666" strokeWidth="0.7">
      <path d="M876 181L879 169L883 181M879 169V181M876 796L879 808L883 796M879 808V796M425 497L416 500L425 504M416 500H425M1331 498L1341 502L1331 506M1341 502H1331" />
      <path d="M1018 373V387L1029 380ZM1018 397V411L1029 403ZM1010 412V443L1034 427ZM1015 390L1026 372M1015 413L1026 395M1006 443L1026 411" />
      <circle cx="1129" cy="241" r="6" />
      <circle cx="1108" cy="285" r="6" />
      <circle cx="1142" cy="366" r="8" />
      <circle cx="653" cy="582" r="6" />
      <circle cx="653" cy="598" r="6" />
      <circle cx="927" cy="621" r="6" />
      <circle cx="927" cy="645" r="6" />
      <circle cx="573" cy="594" r="4" />
      <circle cx="550" cy="685" r="4" />
      <circle cx="685" cy="625" r="4" />
      <circle cx="998" cy="391" r="1" />
      <circle cx="998" cy="403" r="1" />
      {[598, 606, 614, 622, 630, 637, 645].map((y) => <circle key={y} cx="518" cy={y} r="4" />)}
      <path d="M880 577L886 583M888 578L882 587M878 584H893M888 576V590" />
    </g>
    <path d="M579 666H584L581 662ZM579 662H584M683 663H688L685 659ZM683 659H688M750 663H755L752 659ZM750 659H755M774 663H779L776 659ZM774 659H779" stroke="#111" strokeWidth="1" fill="none" />
    <path d="M919 314l4 2.500l-4 2.500zM919 330l4 2.500l-4 2.500zM1053 413l3 2.500l-3 2.500zM1053 437l3 2.500l-3 2.500z" fill="#111" />
    {dots.map(([x, y], i) => <circle key={i} cx={x + 0.5} cy={y + 0.5} r="1.900" fill="#000" />)}
    <g fill="#5c5c5c" fontFamily="DejaVu Sans Mono, monospace">
      {labels.map(([x, y, text, size = 5, anchor = "start"], i) => (
        <text
          key={i}
          x={x}
          y={y}
          fontSize={size}
          textAnchor={anchor}
          fontFamily={size > 6 ? "DejaVu Sans, sans-serif" : undefined}
          fontWeight={size > 6 ? 200 : 400}
        >
          {text}
        </text>
      ))}
      {rails.map(([y, name, volts, amps, use]) => (
        <g key={y} fontSize="4">
          {name && <text x="466" y={y}>{name}</text>}
          {volts && <text x="501" y={y}>{volts}</text>}
          {amps && <text x="600" y={y} textAnchor="middle">{amps}</text>}
          {use && <text x="617" y={y}>{use}</text>}
        </g>
      ))}
      {rightPins.map(([y, pin, inner, net]) => (
        <g key={y}>
          <text x="1048" y={y + 1} fontSize="3" textAnchor="end">{inner}</text>
          <text x="1054" y={y} fontSize="5">{pin}</text>
          {net && <text x="1113" y={y} fontSize="4" textAnchor="end">{net}</text>}
        </g>
      ))}
      {leftPins.map(([y, pin, inner]) => (
        <g key={y}>
          <text x="911" y={y} fontSize="5">{pin}</text>
          <text x="923" y={y} fontSize="3">{inner}</text>
        </g>
      ))}
      {["7", "6", "5", "4", "3", "2", "1"].map((n, i) => (
        <g key={n} fontSize="4">
          <text x="527" y={597 + i * 8}>{n}</text>
          <text x="508" y={600 + i * 8}>{["P1D", "P1D", "P1D", "P1D", "GND", "NTC", "VBAT"][i]}</text>
        </g>
      ))}
      {[729, 735, 741, 747, 754, 760, 766, 772, 779, 785].map((y) => (
        <g key={y} fontSize="4">
          <text x="1026" y={y}>-</text>
          <text x="1041" y={y}>-</text>
        </g>
      ))}
    </g>
    <Logo x={1261} y={740} />
    <Logo x={1093} y={780} />
  </svg>
);

export default function App() {
  return (
    <div className="flex h-screen flex-col overflow-hidden border-b-3 border-r border-[#66cbea] bg-[#efefef] font-[Noto_Sans,sans-serif]">
      <TitleBar />
      <Banner />
      <div className="flex h-[23px] shrink-0">
        <SideTabs />
        <DocTabs />
      </div>
      <main className="flex min-h-0 flex-1">
        <aside className="flex w-[262px] shrink-0 border-r border-[#8d95a0] bg-white pb-1 pt-[7px]">
          <Tree />
          <ScrollBar before={370} thumb={80} after={207} />
          <div className="-mb-1 -mt-[7px] flex w-[9px] flex-col justify-center bg-[#f5f5f5]">
            <svg className="ml-0.5 mt-5 h-2 w-1.5" viewBox="0 0 6 8"><path d="M0 0 L5 4 L0 8 Z" fill="#e01010" /></svg>
          </div>
        </aside>
        <section className="flex min-w-0 flex-1 flex-col">
          <Toolbar />
          <div className="flex min-h-0 flex-1 border-b-2 border-t-2 border-b-[#e2ebf3] border-t-[#989898] bg-[#989898]">
            <div className="min-w-0 flex-1 overflow-hidden">
              <Schematic />
            </div>
            <ScrollBar before={63} thumb={31} after={544} />
          </div>
        </section>
      </main>
      <footer className="flex h-5 shrink-0 items-end justify-between border-t border-[#6f8aa5] bg-[#456789] font-[DejaVu_Sans_Mono,monospace] text-[10px] leading-4">
        <span className="text-black">6403 / 7038</span>
        <span className="pr-0.5 text-white">Current [VQ503_MMI_V01A.SCH]</span>
      </footer>
    </div>
  );
}
